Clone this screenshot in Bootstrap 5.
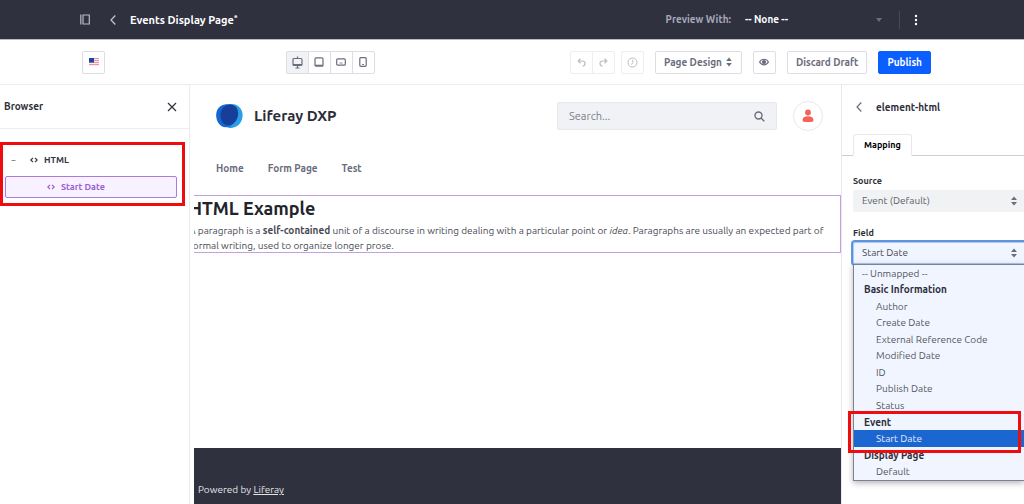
<!DOCTYPE html>
<html lang="en">
<head>
<meta charset="utf-8">
<meta name="viewport" content="width=device-width, initial-scale=1">
<title>Events Display Page</title>
<link href="https://cdn.jsdelivr.net/npm/bootstrap@5.3.0/dist/css/bootstrap.min.css" rel="stylesheet">
<style>
  body { font-family: Ubuntu, "Open Sans", sans-serif; font-size: 10px; line-height: 15px; color: #494a54; --bs-border-color: #e7e7ed; }
  svg { display: block; flex: none; }
  .topbar { height: 39px; background: #30313f; color: #fff; padding: 0 106px 0 80px; }
  .topbar h1 { font-size: 11px; line-height: 16px; font-weight: 600; margin: 0 0 0 14px; }
  .topbar sup { font-size: 8px; top: -4px; }
  .icon-btn { background: none; border: 0; padding: 0; color: inherit; }
  .preview-label { color: #a7a9bc; font-weight: 600; margin-right: 14px; }
  .preview-select { width: 138px; padding: 0 20px 0 0; border: 0; background-color: transparent; color: #fff; font-size: 10px; font-weight: 600; line-height: 20px;
    background-image: url("data:image/svg+xml,%3Csvg xmlns='http://www.w3.org/2000/svg' viewBox='0 0 8 8'%3E%3Cpath d='M1 2h6L4 6z' fill='%236b6c7e'/%3E%3C/svg%3E"); background-size: 8px; background-position: right center; }
  .topbar .vr { width: 1px; height: 18px; color: #8b8c9c; margin: 0 14px 0 16px; }
  .toolbar { height: 46px; border-top: 1px solid #b9bac2; border-bottom: 1px solid #ececef; padding: 0 93px 0 82px; }
  .tool-set { gap: 11px; margin-left: 15px; }
  .history-set { gap: 6px; }
  .tool { height: 23px; min-width: 23px; padding: 0; border: 1px solid #dddde3; border-radius: 2px; color: #6b6c7e; background: #fff; font-size: 10px; font-weight: 600; line-height: 15px;
    display: inline-flex; align-items: center; justify-content: center; }
  .tool.active { background: #f1f2f5; border-color: #dddde3; color: #6b6c7e; }
  .tool:disabled { border-color: #eeeef1; color: #6b6c7e; opacity: 1; }
  .tool:disabled svg { opacity: .45; }
  .btn-group > .tool { flex: none; }
  .page-design { gap: 3px; }
  .publish { background: #0b5fff; border-color: #0b5fff; color: #fff; }
  .workspace { min-height: calc(100vh - 85px); }
  .tree-panel { width: 190px; border-right: 1px solid #ececef; }
  .tree-panel header { height: 44px; border-bottom: 1px solid #ececef; padding: 0 12px 0 4px; }
  h2.panel-title { font-size: 10px; line-height: 15px; font-weight: 600; color: #2e2f3b; margin: 0; }
  .tree { margin-top: 20px; font-size: 9px; font-weight: 600; position: relative; }
  .tree-row { height: 22px; display: flex; align-items: center; gap: 6px; color: #35363f; }
  .tree-row.branch { padding-left: 10px; }
  .tree-row.leaf { margin: 5px 12px 0 5px; padding-left: 41px; border: 1px solid #ad79de; border-radius: 2px; background: #f8f1ff; color: #9b5fd6; text-decoration: none; }
  .marker { position: absolute; border: 3px solid #f00b0f; pointer-events: none; z-index: 5; }
  .tree .marker { inset: -7px 4px -8px 0; }
  .page { min-width: 0; overflow: hidden; }
  .page-head { padding: 16px 18px 0 21px; }
  .brand { font-size: 15px; line-height: 22px; font-weight: 600; color: #2b2d38; text-decoration: none; margin-left: 11px; }
  .site-search { width: 220px; height: 28px; background: #f1f2f5; border: 1px solid #e7e7ed; border-radius: 2px; padding: 0 11px; }
  .site-search input { min-width: 0; border: 0; background: transparent; font-size: 11px; color: #6b6c7e; outline: 0; padding: 0; }
  .site-search input::placeholder { color: #7b7c8b; }
  .avatar { width: 30px; height: 30px; border: 1px solid #e7e7ed; border-radius: 50%; color: #f5625b; }
  .site-nav { padding: 30px 22px 18px; gap: 24px; }
  .site-nav a { color: #6b6c7e; font-weight: 600; font-size: 10px; line-height: 16px; text-decoration: none; }
  .editable { border: 1px solid #c0a2e0; border-left: 0; height: 58px; overflow: hidden; }
  .editable .rich { margin-left: -5px; }
  .editable h3 { font-size: 18px; line-height: 22px; font-weight: 600; color: #22232b; margin: 1px 0 4px; }
  .editable p { margin: 0; padding-right: 12px; }
  .page footer { height: 56px; background: #30313f; color: #e3e4ea; padding: 34px 4px 0; }
  .props { width: 183px; border-left: 1px solid #e7e7ed; color: #494a54; }
  .props header { height: 44px; padding-left: 14px; gap: 14px; color: #6b6c7e; }
  .props .nav-tabs { --bs-nav-tabs-border-color: #cdced9; margin-top: 5px; padding-left: 11px; }
  .props .nav-link { padding: 0 10px; height: 22px; font-size: 9px; line-height: 20px; font-weight: 600; color: #2e2f3b; border-radius: 3px 3px 0 0; border-color: #cdced9 #cdced9 #fff; }
  .fields { padding: 18px 0 0 11px; }
  .fields label { font-size: 9px; line-height: 15px; font-weight: 600; color: #2e2f3b; display: block; margin-bottom: 1px; }
  .fields label + select + label { margin-top: 14px; }
  .field-select { height: 22px; padding: 0 24px 0 8px; border: 1px solid #f1f2f3; border-right: 0; border-radius: 2px 0 0 2px; background-color: #f1f2f3; color: #5c5d69; font-size: 10px; line-height: 18px;
    background-image: url("data:image/svg+xml,%3Csvg xmlns='http://www.w3.org/2000/svg' viewBox='0 0 8 10'%3E%3Cpath d='M1 4l3-3.5L7 4zM1 6h6L4 9.500z' fill='%236b6c7e'/%3E%3C/svg%3E"); background-size: 8px 10px; background-position: right 6px center; }
  .field-select.open { background-color: #f0f5ff; border-color: #a9c8f8; box-shadow: 0 0 0 2px #5f95dc; color: #494a54; }
  .choices { position: absolute; left: 0; right: 0; top: 100%; height: 217px; background: #f0f5ff; border: 1px solid #7d8290; border-right: 0; box-shadow: 0 2px 6px rgba(39,40,51,.35); display: flex; flex-direction: column; z-index: 3; }
  .choices > div { flex: 1 1 0; display: flex; align-items: center; min-height: 0; padding-left: 22px; white-space: nowrap; color: #54555f; }
  .choices > .top-level { padding-left: 8px; }
  .choices > .group-name { padding-left: 10px; font-weight: 700; color: #2e2f3b; }
  .choices > .picked { background: #1b66d1; color: #e4edfb; }
  .choices .marker { left: -6px; right: 3px; top: 146px; height: 42px; }
</style>
<script src="https://cdn.jsdelivr.net/npm/bootstrap@5.3.0/dist/js/bootstrap.bundle.min.js"></script>
</head>
<body class="bg-white overflow-hidden">

<div class="topbar d-flex align-items-center">
  <button class="icon-btn" type="button" aria-label="Toggle menu">
    <svg width="10" height="11" viewBox="0 0 10 11" fill="none" stroke="#b9bac8" stroke-width="1.200"><path d="M.8.500v10M3 1h6.300v9H3z"/></svg>
  </button>
  <button class="icon-btn ms-3 ps-1" type="button" aria-label="Back">
    <svg width="6" height="10" viewBox="0 0 6 10" fill="none" stroke="#c5c6d2" stroke-width="1.200"><path d="M5.300.500 1 5l4.300 4.500"/></svg>
  </button>
  <h1 class="text-nowrap flex-grow-1">Events Display Page<sup>*</sup></h1>
  <label class="preview-label text-nowrap" for="preview">Preview With:</label>
  <select class="form-select preview-select" id="preview"><option>-- None --</option></select>
  <span class="vr align-self-center"></span>
  <button class="icon-btn" type="button" aria-label="Options">
    <svg width="4" height="12" viewBox="0 0 4 12" fill="#fff"><circle cx="2" cy="2" r="1.200"/><circle cx="2" cy="6" r="1.200"/><circle cx="2" cy="10" r="1.200"/></svg>
  </button>
</div>

<div class="toolbar d-flex align-items-center justify-content-between">
  <button class="btn tool" type="button" aria-label="English (United States)">
    <svg width="10" height="8" viewBox="0 0 10 8"><path fill="#fbe9ec" d="M0 0h10v8H0z"/><path stroke="#dc8493" stroke-width=".8" d="M0 .5h10M0 2.500h10M0 4.500h10M0 6.500h10"/><path fill="#1f4499" d="M0 0h5v4.500H0z"/></svg>
  </button>
  <div class="btn-group" role="group" aria-label="Viewport">
    <button class="btn tool active" type="button" aria-label="Desktop">
      <svg width="11" height="13" viewBox="0 0 11 13" fill="none" stroke="currentColor" stroke-width="1.200"><rect x="1" y="2.500" width="9" height="7" rx="1"/><path d="M1 8.500h9M5.500.500v2M5.500 9.500V12M3.500 12h4"/></svg>
    </button>
    <button class="btn tool" type="button" aria-label="Tablet">
      <svg width="10" height="10" viewBox="0 0 10 10" fill="none" stroke="currentColor" stroke-width="1.200"><rect x="1" y=".8" width="8" height="8.400" rx="1"/><path d="M1 8.300h8"/></svg>
    </button>
    <button class="btn tool" type="button" aria-label="Landscape phone">
      <svg width="10" height="8" viewBox="0 0 10 8" fill="none" stroke="currentColor" stroke-width="1.200"><rect x=".7" y=".8" width="8.600" height="6.400" rx="1"/><path stroke-width=".8" d="M3.500 5h3"/></svg>
    </button>
    <button class="btn tool" type="button" aria-label="Portrait phone">
      <svg width="8" height="10" viewBox="0 0 8 10" fill="none" stroke="currentColor" stroke-width="1.200"><rect x=".8" y=".7" width="6.400" height="8.600" rx="1"/><path stroke-width=".9" d="M3 7.500h2"/></svg>
    </button>
  </div>
  <div class="tool-set d-flex align-items-center">
    <div class="history-set d-flex">
      <div class="btn-group" role="group" aria-label="History">
        <button class="btn tool" type="button" disabled aria-label="Undo">
          <svg width="9" height="9" viewBox="0 0 9 9" fill="none" stroke="currentColor" stroke-width="1.200"><path d="M3.500.800 1.200 3 3.500 5.200M1.200 3H5.500a2.400 2.400 0 0 1 0 5"/></svg>
        </button>
        <button class="btn tool" type="button" disabled aria-label="Redo">
          <svg width="9" height="9" viewBox="0 0 9 9" fill="none" stroke="currentColor" stroke-width="1.200"><path d="M5.500.800 7.800 3 5.500 5.200M7.800 3H3.500a2.400 2.400 0 0 0 0 5"/></svg>
        </button>
      </div>
      <button class="btn tool" type="button" disabled aria-label="Change history">
        <svg width="11" height="11" viewBox="0 0 11 11" fill="none" stroke="currentColor"><circle cx="5.500" cy="5.500" r="4.500"/><path d="M5.800 2.800v2.700L4.500 7.500"/></svg>
      </button>
    </div>
    <button class="btn tool px-2 page-design" type="button">Page Design
      <svg width="8" height="10" viewBox="0 0 8 10" fill="currentColor"><path d="M1.200 4 4 .5 6.800 4zM1.200 6h5.600L4 9.500z"/></svg>
    </button>
    <button class="btn tool" type="button" aria-label="Preview">
      <svg width="10" height="8" viewBox="0 0 10 8" fill="none" stroke="currentColor" stroke-width="1.200"><path d="M.6 4C2.500.300 7.500.300 9.400 4 7.500 7.700 2.500 7.700.600 4z"/><circle cx="5" cy="4" r="1.500" fill="currentColor"/></svg>
    </button>
    <button class="btn tool px-2" type="button">Discard Draft</button>
    <button class="btn tool px-2 publish" type="button">Publish</button>
  </div>
</div>

<div class="workspace d-flex align-items-stretch">
  <aside class="tree-panel flex-shrink-0">
    <header class="d-flex align-items-center justify-content-between">
      <h2 class="panel-title">Browser</h2>
      <button class="icon-btn" type="button" aria-label="Close">
        <svg width="10" height="10" viewBox="0 0 10 10" fill="none" stroke="#35363f" stroke-width="1.300"><path d="m1 1 8 8M9 1 1 9"/></svg>
      </button>
    </header>
    <div class="tree">
      <div class="tree-row branch">
        <svg width="14" height="8" viewBox="0 0 14 8"><path stroke="#898a97" d="M1.500 4.500h4"/></svg>
        <svg width="8" height="8" viewBox="0 0 8 8" fill="none" stroke="currentColor" stroke-width="1.200"><path d="M3 1.800.800 4 3 6.200M5 1.800 7.200 4 5 6.200"/></svg>
        <span>HTML</span>
      </div>
      <a class="tree-row leaf" href="#">
        <svg width="8" height="8" viewBox="0 0 8 8" fill="none" stroke="currentColor" stroke-width="1.200"><path d="M3 1.800.800 4 3 6.200M5 1.800 7.200 4 5 6.200"/></svg>
        <span>Start Date</span>
      </a>
      <div class="marker"></div>
    </div>
  </aside>

  <main class="page flex-grow-1 d-flex flex-column ms-1">
    <div class="page-head d-flex align-items-center">
      <svg width="28" height="28" viewBox="0 0 28 28"><ellipse cx="16.500" cy="14" rx="11" ry="12" transform="rotate(18 16.500 14)" fill="#2a9fe8"/><path fill="#1467d2" d="M2.200 8C4.500 3.500 9.500 1.500 14 2.300c6 1.200 8.500 6 7.700 11.700-1 7-5.500 11-11.200 11.300C3.500 25.200-1 15.500 2.200 8z"/><path fill="#173f9a" d="M7 7.500C9.500 3 15 1.700 18.500 3.200c4 1.800 5.500 6.500 4.300 11.300-1.500 6-6 9.200-11 8.700C6.500 22.300 3.500 13 7 7.500z"/></svg>
      <a class="brand me-auto" href="#">Liferay DXP</a>
      <form class="site-search d-flex align-items-center me-3">
        <input class="flex-grow-1" type="text" placeholder="Search..." aria-label="Search">
        <button class="icon-btn" type="button" aria-label="Submit search">
          <svg width="11" height="11" viewBox="0 0 11 11" fill="none" stroke="#6b6c7e" stroke-width="1.400"><circle cx="4.500" cy="4.500" r="3.500"/><path d="m7 7 3.300 3.300"/></svg>
        </button>
      </form>
      <button class="icon-btn avatar d-flex align-items-center justify-content-center" type="button" aria-label="User profile">
        <svg width="12" height="14" viewBox="0 0 12 14" fill="currentColor"><circle cx="6" cy="3.500" r="2.900"/><path d="M6 7.300c3.500 0 5.500 1.700 5.500 3.800 0 1.700-1 2-5.500 2s-5.500-.3-5.500-2C.500 9 2.500 7.300 6 7.300z"/></svg>
      </button>
    </div>
    <nav class="site-nav d-flex">
      <a href="#">Home</a><a href="#">Form Page</a><a href="#">Test</a>
    </nav>
    <section class="editable">
      <div class="rich">
        <h3>HTML Example</h3>
        <p>A paragraph is a <strong>self-contained</strong> unit of a discourse in writing dealing with a particular point or <em>idea</em>. Paragraphs are usually an expected part of formal writing, used to organize longer prose.</p>
      </div>
    </section>
    <footer class="mt-auto">Powered by <a class="text-reset" href="#">Liferay</a></footer>
  </main>

  <aside class="props flex-shrink-0">
    <header class="d-flex align-items-center">
      <button class="icon-btn" type="button" aria-label="Back">
        <svg width="6" height="10" viewBox="0 0 6 10" fill="none" stroke="currentColor" stroke-width="1.200"><path d="M5.300.500 1 5l4.300 4.500"/></svg>
      </button>
      <h2 class="panel-title">element-html</h2>
    </header>
    <ul class="nav nav-tabs" role="tablist">
      <li class="nav-item" role="presentation"><button class="nav-link active" type="button" role="tab" aria-selected="true">Mapping</button></li>
    </ul>
    <div class="fields">
      <label for="source">Source</label>
      <select class="form-select field-select" id="source"><option>Event (Default)</option></select>
      <label for="field">Field</label>
      <div class="position-relative">
        <select class="form-select field-select open" id="field"><option>Start Date</option></select>
        <div class="choices" role="listbox" aria-label="Field">
          <div class="top-level" role="option">-- Unmapped --</div>
          <div class="group-name">Basic Information</div>
          <div role="option">Author</div>
          <div role="option">Create Date</div>
          <div role="option">External Reference Code</div>
          <div role="option">Modified Date</div>
          <div role="option">ID</div>
          <div role="option">Publish Date</div>
          <div role="option">Status</div>
          <div class="group-name">Event</div>
          <div class="picked" role="option" aria-selected="true">Start Date</div>
          <div class="group-name">Display Page</div>
          <div role="option">Default</div>
          <span class="marker"></span>
        </div>
      </div>
    </div>
  </aside>
</div>
</body>
</html>
